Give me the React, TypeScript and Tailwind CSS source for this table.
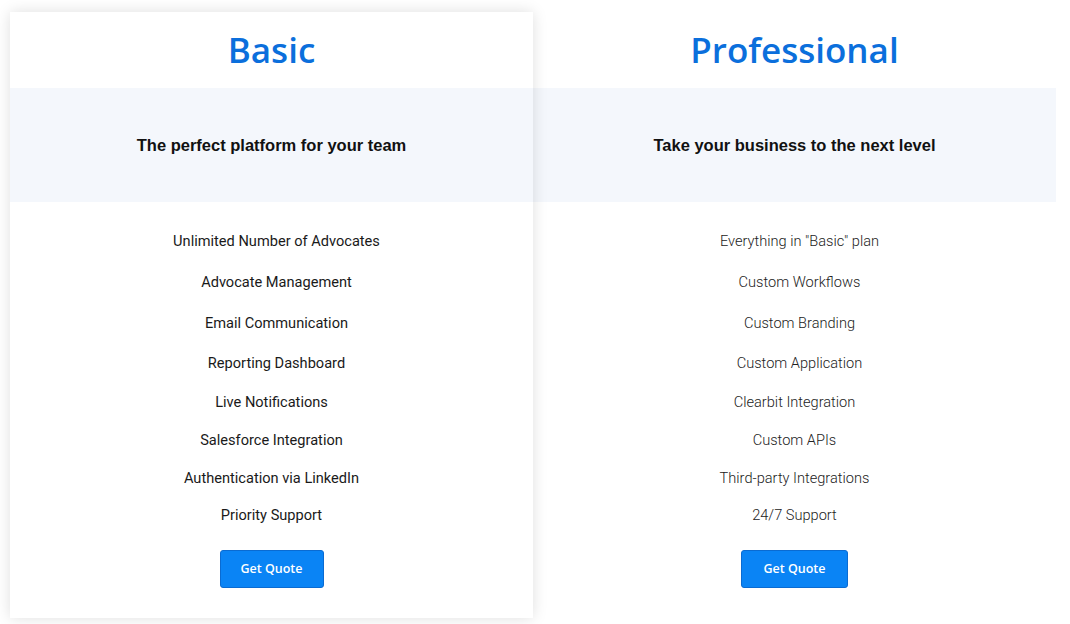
import React from "react";

const rowH = ["h-[41px]", "h-[41px]", "h-[41px]", "h-[40px]", "h-[38px]", "h-[38px]", "h-[37px]", "h-[38px]"];

type Plan = {
  title: string;
  sub: string;
  features: string[];
  light: boolean;
  shadow: boolean;
  btnW: string;
};

const plans: Plan[] = [
  {
    title: "Basic",
    sub: "The perfect platform for your team",
    features: [
      "Unlimited Number of Advocates",
      "Advocate Management",
      "Email Communication",
      "Reporting Dashboard",
      "Live Notifications",
      "Salesforce Integration",
      "Authentication via LinkedIn",
      "Priority Support",
    ],
    light: false,
    shadow: true,
    btnW: "w-[104px]",
  },
  {
    title: "Professional",
    sub: "Take your business to the next level",
    features: [
      "Everything in \"Basic\" plan",
      "Custom Workflows",
      "Custom Branding",
      "Custom Application",
      "Clearbit Integration",
      "Custom APIs",
      "Third-party Integrations",
      "24/7 Support",
    ],
    light: true,
    shadow: false,
    btnW: "w-[107px]",
  },
];

function Card({ p }: { p: Plan }) {
  return (
    <div
      className={
        "w-[523px] flex flex-col bg-white " +
        (p.shadow ? "relative z-10 shadow-[0_0_14px_rgba(0,0,0,0.13)]" : "")
      }
    >
      <div className="h-[76px] flex items-center justify-center">
        <h2
          className="text-[35px] leading-none font-[560] text-[#0b6fdc] tracking-[0px] pb-[2px]"
          style={{ fontFamily: '"Open Sans", "Noto Sans", sans-serif' }}
        >
          {p.title}
        </h2>
      </div>
      <div className="h-[114px] bg-[#f4f7fc] flex items-center justify-center">
        <p
          className="text-[16.5px] font-bold text-[#111]"
          style={{ fontFamily: '"Liberation Sans", Arial, sans-serif' }}
        >
          {p.sub}
        </p>
      </div>
      <div className="pt-[19px] flex flex-col">
        {p.features.map((f, i) => (
          <div
            key={f}
            className={
              rowH[i] +
              " flex items-center justify-center text-[14.6px] " +
              (i < 4 ? "pl-[10px] " : "") +
              (p.light ? "font-light text-[#222]" : "font-normal text-[#1a1a1a]")
            }
            style={{ fontFamily: "Roboto, sans-serif" }}
          >
            {f}
          </div>
        ))}
      </div>
      <div className="pt-[15px] pb-[30px] flex justify-center">
        <button
          className={p.btnW + " h-[38px] bg-[#0a84f5] border border-[#0a6bd2] rounded-[3px] text-white text-[12.5px] font-semibold"}
          style={{ fontFamily: '"Open Sans", "Noto Sans", sans-serif' }}
        >
          Get Quote
        </button>
      </div>
    </div>
  );
}

export default function App() {
  return (
    <div className="w-[1070px] h-[624px] bg-white overflow-hidden">
      <div className="pl-[10px] pt-[12px] flex items-start">
        {plans.map((p) => (
          <Card key={p.title} p={p} />
        ))}
      </div>
    </div>
  );
}
